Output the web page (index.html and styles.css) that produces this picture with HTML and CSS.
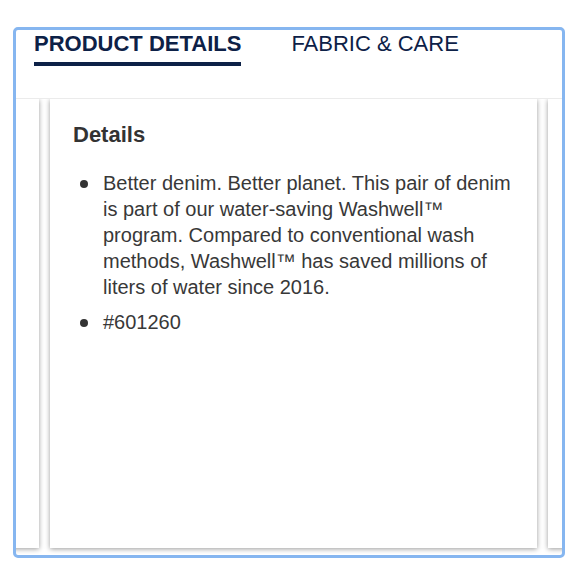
FILE: index.html
```html
<!DOCTYPE html>
<html>
<head>
    <title>Product Details</title>
    <link rel="stylesheet" href="styles.css">
</head>
<body>
<div class="frame">
    <div class="tabs">
        <div class="tab active">PRODUCT DETAILS</div>
        <div class="tab">FABRIC &amp; CARE</div>
    </div>

    <div class="carousel">
        <div class="track">
            <div class="card"></div>
            <div class="card">
                <h2 class="card-title">Details</h2>
                <ul class="bullets">
                    <li>Better denim. Better planet. This pair of denim is part of our water-saving Washwell™ program. Compared to conventional wash methods, Washwell™ has saved millions of liters of water since 2016.</li>
                    <li>#601260</li>
                </ul>
            </div>
            <div class="card"></div>
        </div>
    </div>
</div>
</body>
</html>
```

FILE: styles.css
```css
body {
    margin: 0;
    background-color: #fff;
    font-family: "Liberation Sans", Arial, Helvetica, sans-serif;
}

.frame {
    margin: 27px 0 0 13px;
    width: 546px;
    height: 525px;
    border: 3px solid #86b6f0;
    border-radius: 5px;
    overflow: hidden;
    background-color: #fff;
}

.tabs {
    display: flex;
    gap: 50px;
    height: 69px;
    padding: 1px 0 0 18px;
    box-sizing: border-box;
    border-bottom: 1px solid #ebebeb;
}

.tab {
    font-size: 22px;
    line-height: 25px;
    color: #0d2147;
    align-self: flex-start;
}

.tab.active {
    font-weight: bold;
    padding-bottom: 6px;
    border-bottom: 4px solid #0d2147;
}

.carousel {
    height: 455px;
    overflow: hidden;
}

.track {
    display: flex;
    gap: 11px;
    margin-left: -464px;
    height: 449px;
}

.card {
    flex: none;
    width: 487px;
    height: 449px;
    box-sizing: border-box;
    padding: 23px 22px 0 23px;
    background-color: #fff;
    box-shadow: 0 1px 5px rgba(0, 0, 0, 0.4);
}

.card-title {
    margin: 0;
    font-size: 22px;
    line-height: 25px;
    font-weight: bold;
    color: #333;
}

.bullets {
    list-style: none;
    margin: 23px 0 0 0;
    padding: 0;
}

.bullets li {
    display: flex;
    padding-left: 7px;
    font-size: 20px;
    line-height: 26px;
    color: #383838;
}

.bullets li + li {
    margin-top: 9px;
}

.bullets li::before {
    content: "";
    flex: none;
    width: 8px;
    height: 8px;
    margin: 10px 15px 0 0;
    border-radius: 50%;
    background-color: #333;
}
```
